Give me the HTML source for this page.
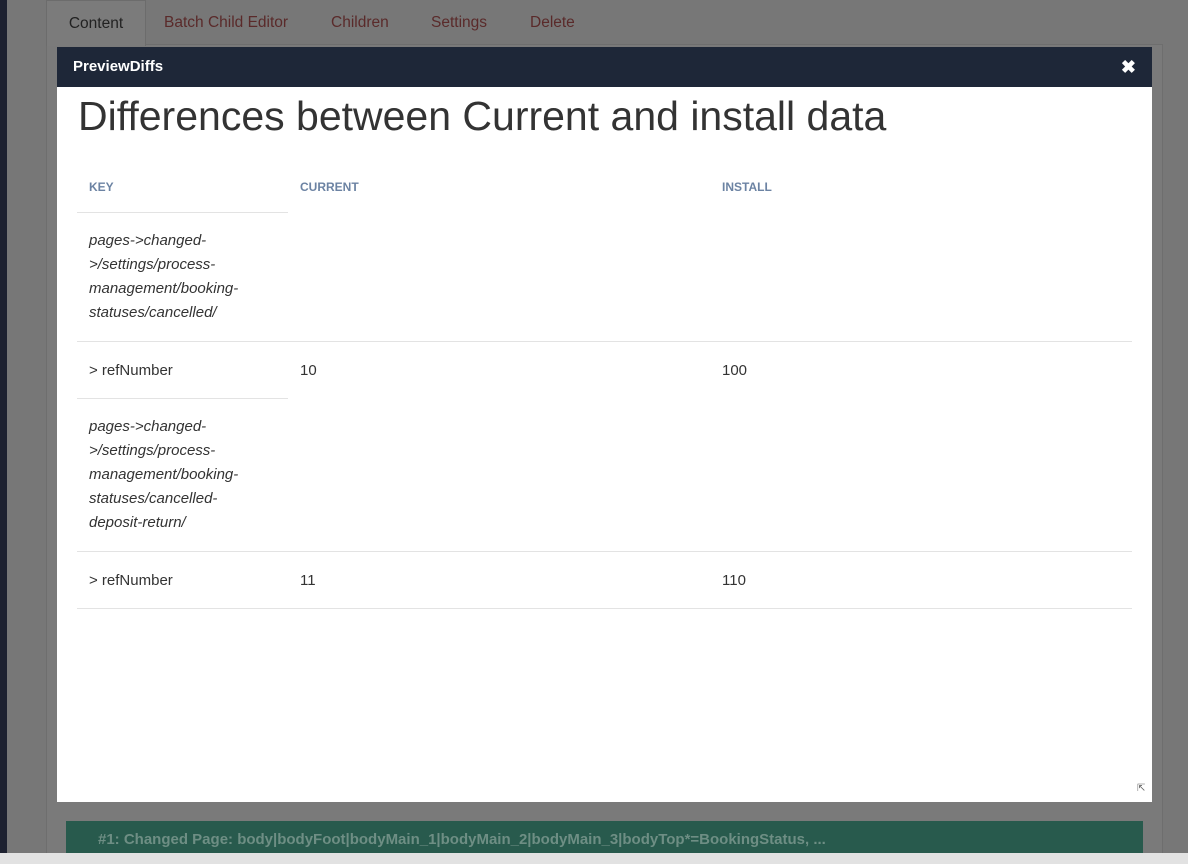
<!DOCTYPE html>
<html><head><style>
*{margin:0;padding:0;box-sizing:border-box}
body{width:1188px;height:864px;overflow:hidden;background:#777;font-family:"Liberation Sans",sans-serif;position:relative}
.side{position:absolute;left:0;top:0;width:7px;height:864px;background:#1d2130}
.panel{position:absolute;left:46px;top:44px;width:1117px;height:810px;background:#7a7a7a;border:1px solid #6e6e6e}
.tab{position:absolute;top:0;height:46px;font-size:15.5px;line-height:46px;color:#5a2a2a}
.tab.a{left:46px;width:100px;background:#7b7b7b;border:1px solid #6c6c6c;border-bottom:none;color:#222;text-align:center}
.modal{position:absolute;left:57px;top:47px;width:1095px;height:755px;background:#fff}
.hd{height:40px;background:#1e2738;color:#fff;font-weight:bold;font-size:15px;line-height:40px;padding-left:16px;position:relative}
.x{position:absolute;right:16px;top:0;font-size:18px}
h1{font-weight:normal;font-size:41px;color:#333;position:absolute;left:21px;top:46px}
.t{position:absolute;font-size:15px;color:#333}
.th{position:absolute;font-size:12px;font-weight:bold;color:#6c83a3;top:133px}
.ln{position:absolute;height:1px;background:#e3e3e3}
.it{font-style:italic;line-height:24px}
.green{position:absolute;left:66px;top:821px;width:1077px;height:33px;background:#285a4d;color:#6e8e84;font-weight:bold;font-size:15px;line-height:38px;padding-left:32px}
.bot{position:absolute;left:0;top:853px;width:1188px;height:11px;background:#e2e2e2}
</style></head><body>
<div class="side"></div>
<div class="panel"></div>
<div class="tab a">Content</div>
<div class="tab" style="left:164px">Batch Child Editor</div>
<div class="tab" style="left:331px">Children</div>
<div class="tab" style="left:431px">Settings</div>
<div class="tab" style="left:530px">Delete</div>
<div class="green">#1: Changed Page: body|bodyFoot|bodyMain_1|bodyMain_2|bodyMain_3|bodyTop*=BookingStatus, ...</div>
<div class="bot"></div>
<div class="modal">
<div class="hd">PreviewDiffs<span class="x">✖</span></div>
<h1>Differences between Current and install data</h1>
<div class="th" style="left:32px">KEY</div>
<div class="th" style="left:243px">CURRENT</div>
<div class="th" style="left:665px">INSTALL</div>
<div class="ln" style="left:20px;top:165px;width:211px"></div>
<div class="t it" style="left:32px;top:182px">pages-&gt;changed-<br>&gt;/settings/process-<br>management/booking-<br>statuses/cancelled/</div>
<div class="ln" style="left:20px;top:294px;width:1055px"></div>
<div class="t" style="left:32px;top:315px">&gt; refNumber</div>
<div class="t" style="left:243px;top:315px">10</div>
<div class="t" style="left:665px;top:315px">100</div>
<div class="ln" style="left:20px;top:351px;width:211px"></div>
<div class="t it" style="left:32px;top:368px">pages-&gt;changed-<br>&gt;/settings/process-<br>management/booking-<br>statuses/cancelled-<br>deposit-return/</div>
<div class="ln" style="left:20px;top:504px;width:1055px"></div>
<div class="t" style="left:32px;top:525px">&gt; refNumber</div>
<div class="t" style="left:243px;top:525px">11</div>
<div class="t" style="left:665px;top:525px">110</div>
<div class="ln" style="left:20px;top:561px;width:1055px"></div>
<div class="t" style="left:1080px;top:736px;font-size:10px;color:#666">⇱</div>
</div>
</body></html>
